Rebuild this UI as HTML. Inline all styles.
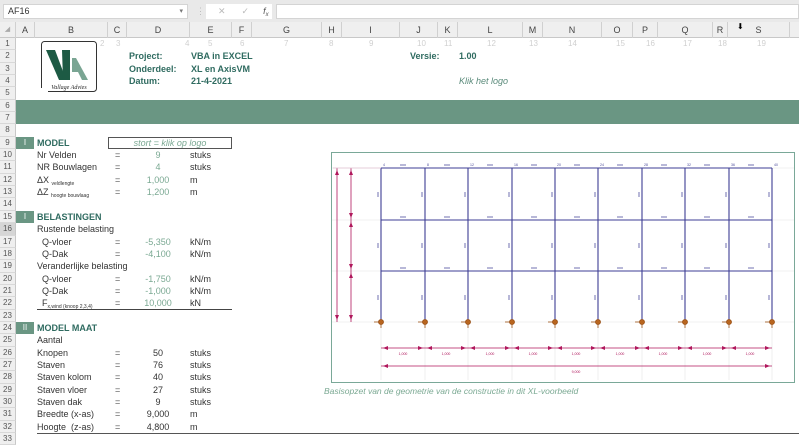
<!DOCTYPE html>
<html><head><meta charset="utf-8">
<style>
*{margin:0;padding:0;box-sizing:border-box}
body{width:799px;height:437px;overflow:hidden;background:#fff;font-family:"Liberation Sans",sans-serif;font-size:9px;color:#333;position:relative}
.a{position:absolute;white-space:nowrap}
#fb{position:absolute;left:0;top:0;width:799px;height:22px;background:#e9e9e9}
#hdr{position:absolute;left:0;top:22px;width:799px;height:16px;background:#efefef;border-bottom:1px solid #c8c8c8}
.ch{position:absolute;top:0;height:16px;line-height:16px;text-align:center;color:#444;font-size:9px;border-right:1px solid #d0d0d0}
#rows{position:absolute;left:0;top:38px;width:799px}
.r{position:relative;height:12.35px;line-height:12.35px}
.rn{position:absolute;left:0;top:0;width:16px;height:100%;background:#efefef;color:#555;font-size:8px;text-align:center;border-bottom:1px solid #d8d8d8;border-right:1px solid #c8c8c8}
.r .c{position:absolute;top:0;white-space:nowrap}
sub{font-size:5px;line-height:0;vertical-align:-2px}
.t{color:#2f6b60;font-weight:bold}
.g{color:#7ba993;text-align:center;width:30px;left:143px}
.k{color:#333;text-align:center;width:30px;left:143px}
.eq{left:115px;color:#555}
.u{left:190px}
.sec{left:16px;width:18px;height:100%;background:#6a9683;color:#fff;text-align:center;font-size:8px}
.faint{color:#d0d0d0;font-size:8px}
</style></head><body>
<div id="fb">
 <div class="a" style="left:3px;top:4px;width:185px;height:15px;background:#fff;border:1px solid #d4d4d4;line-height:13px;padding-left:4px;color:#333">AF16<span style="position:absolute;right:4px;color:#777;font-size:7px">▾</span></div>
 <div class="a" style="left:196px;top:6px;color:#bbb">⋮</div>
 <div class="a" style="left:206px;top:4px;width:66px;height:15px;background:#fff;line-height:14px;color:#bbb"><span style="margin-left:12px">✕</span><span style="margin-left:16px">✓</span><span style="margin-left:14px;font-style:italic;color:#555">f<sub style="font-size:6px">x</sub></span></div>
 <div class="a" style="left:276px;top:4px;width:523px;height:15px;background:#fff;border:1px solid #d4d4d4"></div>
</div>
<div id="hdr">
 <div class="ch" style="left:0;width:16px;color:#aaa;font-size:7px">◢</div>
 <div class="ch" style="left:16px;width:19px">A</div>
 <div class="ch" style="left:35px;width:73px">B</div>
 <div class="ch" style="left:108px;width:19px">C</div>
 <div class="ch" style="left:127px;width:63px">D</div>
 <div class="ch" style="left:190px;width:42px">E</div>
 <div class="ch" style="left:232px;width:20px">F</div>
 <div class="ch" style="left:252px;width:70px">G</div>
 <div class="ch" style="left:322px;width:20px">H</div>
 <div class="ch" style="left:342px;width:58px">I</div>
 <div class="ch" style="left:400px;width:38px">J</div>
 <div class="ch" style="left:438px;width:20px">K</div>
 <div class="ch" style="left:458px;width:65px">L</div>
 <div class="ch" style="left:523px;width:20px">M</div>
 <div class="ch" style="left:543px;width:59px">N</div>
 <div class="ch" style="left:602px;width:31px">O</div>
 <div class="ch" style="left:633px;width:25px">P</div>
 <div class="ch" style="left:658px;width:55px">Q</div>
 <div class="ch" style="left:713px;width:15px">R</div>
 <div class="ch" style="left:728px;width:62px">S</div>
 <div class="a" style="left:737px;top:0;font-size:8px;color:#000">⬇</div>
</div>
<div id="rows">
<div class="r"><div class="rn">1</div>
 <span class="c faint" style="left:100px">2</span><span class="c faint" style="left:116px">3</span><span class="c faint" style="left:185px">4</span><span class="c faint" style="left:208px">5</span><span class="c faint" style="left:240px">6</span><span class="c faint" style="left:284px">7</span><span class="c faint" style="left:329px">8</span><span class="c faint" style="left:369px">9</span><span class="c faint" style="left:417px">10</span><span class="c faint" style="left:444px">11</span><span class="c faint" style="left:487px">12</span><span class="c faint" style="left:529px">13</span><span class="c faint" style="left:568px">14</span><span class="c faint" style="left:616px">15</span><span class="c faint" style="left:646px">16</span><span class="c faint" style="left:683px">17</span><span class="c faint" style="left:718px">18</span><span class="c faint" style="left:757px">19</span></div>
<div class="r"><div class="rn">2</div><span class="c t" style="left:129px">Project:</span><span class="c t" style="left:191px">VBA in EXCEL</span><span class="c t" style="left:410px">Versie:</span><span class="c t" style="left:459px">1.00</span></div>
<div class="r"><div class="rn">3</div><span class="c t" style="left:129px">Onderdeel:</span><span class="c t" style="left:191px">XL en AxisVM</span></div>
<div class="r"><div class="rn">4</div><span class="c t" style="left:129px">Datum:</span><span class="c t" style="left:191px">21-4-2021</span><span class="c" style="left:459px;color:#5a8a7a;font-style:italic">Klik het logo</span></div>
<div class="r"><div class="rn">5</div></div>
<div class="r" style="background:#6a9683"><div class="rn">6</div></div>
<div class="r" style="background:#6a9683"><div class="rn">7</div></div>
<div class="r"><div class="rn">8</div></div>
<div class="r"><div class="rn">9</div><span class="c sec">I</span><span class="c t" style="left:37px">MODEL</span><span class="c" style="left:108px;width:124px;height:12px;line-height:10px;border:1px solid #555;color:#7ba993;font-style:italic;text-align:center">stort = klik op logo</span></div>
<div class="r"><div class="rn">10</div><span class="c" style="left:37px">Nr Velden</span><span class="c eq">=</span><span class="c g">9</span><span class="c u">stuks</span></div>
<div class="r"><div class="rn">11</div><span class="c" style="left:37px">NR Bouwlagen</span><span class="c eq">=</span><span class="c g">4</span><span class="c u">stuks</span></div>
<div class="r"><div class="rn">12</div><span class="c" style="left:37px">ΔX <sub>veldlengte</sub></span><span class="c eq">=</span><span class="c g">1,000</span><span class="c u">m</span></div>
<div class="r"><div class="rn">13</div><span class="c" style="left:37px">ΔZ <sub>hoogte bouwlaag</sub></span><span class="c eq">=</span><span class="c g">1,200</span><span class="c u">m</span></div>
<div class="r"><div class="rn">14</div></div>
<div class="r"><div class="rn">15</div><span class="c sec">I</span><span class="c t" style="left:37px">BELASTINGEN</span></div>
<div class="r"><div class="rn" style="background:#d6d6d6">16</div><span class="c" style="left:37px">Rustende belasting</span></div>
<div class="r"><div class="rn">17</div><span class="c" style="left:42px">Q-vloer</span><span class="c eq">=</span><span class="c g">-5,350</span><span class="c u">kN/m</span></div>
<div class="r"><div class="rn">18</div><span class="c" style="left:42px">Q-Dak</span><span class="c eq">=</span><span class="c g">-4,100</span><span class="c u">kN/m</span></div>
<div class="r"><div class="rn">19</div><span class="c" style="left:37px">Veranderlijke belasting</span></div>
<div class="r"><div class="rn">20</div><span class="c" style="left:42px">Q-vloer</span><span class="c eq">=</span><span class="c g">-1,750</span><span class="c u">kN/m</span></div>
<div class="r"><div class="rn">21</div><span class="c" style="left:42px">Q-Dak</span><span class="c eq">=</span><span class="c g">-1,000</span><span class="c u">kN/m</span></div>
<div class="r"><div class="rn">22</div><span class="c" style="left:42px">F<sub>x,wind (knoop 2,3,4)</sub></span><span class="c eq">=</span><span class="c g">10,000</span><span class="c u">kN</span><div class="c" style="left:37px;width:195px;bottom:0;top:auto;height:1px;background:#444"></div></div>
<div class="r"><div class="rn">23</div></div>
<div class="r"><div class="rn">24</div><span class="c sec">II</span><span class="c t" style="left:37px">MODEL MAAT</span></div>
<div class="r"><div class="rn">25</div><span class="c" style="left:37px">Aantal</span></div>
<div class="r"><div class="rn">26</div><span class="c" style="left:37px">Knopen</span><span class="c eq">=</span><span class="c k">50</span><span class="c u">stuks</span></div>
<div class="r"><div class="rn">27</div><span class="c" style="left:37px">Staven</span><span class="c eq">=</span><span class="c k">76</span><span class="c u">stuks</span></div>
<div class="r"><div class="rn">28</div><span class="c" style="left:37px">Staven kolom</span><span class="c eq">=</span><span class="c k">40</span><span class="c u">stuks</span></div>
<div class="r"><div class="rn">29</div><span class="c" style="left:37px">Staven vloer</span><span class="c eq">=</span><span class="c k">27</span><span class="c u">stuks</span></div>
<div class="r"><div class="rn">30</div><span class="c" style="left:37px">Staven dak</span><span class="c eq">=</span><span class="c k">9</span><span class="c u">stuks</span></div>
<div class="r"><div class="rn">31</div><span class="c" style="left:37px">Breedte (x-as)</span><span class="c eq">=</span><span class="c k">9,000</span><span class="c u">m</span></div>
<div class="r"><div class="rn">32</div><span class="c" style="left:37px">Hoogte &nbsp;(z-as)</span><span class="c eq">=</span><span class="c k">4,800</span><span class="c u">m</span><div class="c" style="left:37px;width:762px;bottom:-1px;top:auto;height:1px;background:#555"></div></div>
<div class="r"><div class="rn">33</div></div>
</div>

<!-- logo -->
<svg class="a" style="left:40px;top:40px" width="58" height="54" viewBox="0 0 58 54">
 <rect x="1.5" y="1.5" width="55" height="50" rx="3" fill="#fff" stroke="#333" stroke-width="1"/>
 <polygon points="6,10 15,10 24,34 24,40 19,40" fill="#1d5a44"/>
 <polygon points="22,10 30,10 30,40 23,40" fill="#1d5a44"/>
 <polygon points="32,18 36,18 48,40 42,40 38,32 32,32" fill="#7aa593"/>
 <text x="29" y="49" font-size="6" font-style="italic" font-family="Liberation Serif" fill="#222" text-anchor="middle">Vallage Advies</text>
 <rect x="0" y="44" width="8" height="8" fill="#fff"/><line x1="1.5" y1="44" x2="1.5" y2="48" stroke="#333"/>
</svg>

<!-- frame picture -->
<svg class="a" style="left:0;top:0" width="799" height="437">
 <rect x="331.5" y="152.5" width="463" height="230" fill="#fff" stroke="#7aa898" stroke-width="1"/>
 <g stroke="#e4e4e4" stroke-width="0.6">
  <line x1="332" y1="168" x2="794" y2="168"/><line x1="332" y1="220" x2="794" y2="220"/><line x1="332" y1="271" x2="794" y2="271"/><line x1="332" y1="322" x2="794" y2="322"/>
  <line x1="381" y1="322" x2="381" y2="380"/><line x1="425" y1="322" x2="425" y2="380"/><line x1="468" y1="322" x2="468" y2="380"/><line x1="512" y1="322" x2="512" y2="380"/><line x1="555" y1="322" x2="555" y2="380"/><line x1="598" y1="322" x2="598" y2="380"/><line x1="642" y1="322" x2="642" y2="380"/><line x1="685" y1="322" x2="685" y2="380"/><line x1="729" y1="322" x2="729" y2="380"/><line x1="772" y1="322" x2="772" y2="380"/>
 </g>
 <g stroke="#3e3e94" stroke-width="1.1">
  <line x1="381" y1="168" x2="772" y2="168"/><line x1="381" y1="220" x2="772" y2="220"/><line x1="381" y1="271" x2="772" y2="271"/>
  <line x1="381" y1="168" x2="381" y2="322"/><line x1="425" y1="168" x2="425" y2="322"/><line x1="468" y1="168" x2="468" y2="322"/><line x1="512" y1="168" x2="512" y2="322"/><line x1="555" y1="168" x2="555" y2="322"/><line x1="598" y1="168" x2="598" y2="322"/><line x1="642" y1="168" x2="642" y2="322"/><line x1="685" y1="168" x2="685" y2="322"/><line x1="729" y1="168" x2="729" y2="322"/><line x1="772" y1="168" x2="772" y2="322"/>
 </g>
 <g fill="#b8b8d8">
  <rect x="400" y="164" width="6" height="2"/><rect x="444" y="164" width="6" height="2"/><rect x="487" y="164" width="6" height="2"/><rect x="531" y="164" width="6" height="2"/><rect x="574" y="164" width="6" height="2"/><rect x="617" y="164" width="6" height="2"/><rect x="661" y="164" width="6" height="2"/><rect x="704" y="164" width="6" height="2"/><rect x="748" y="164" width="6" height="2"/>
  <rect x="400" y="216" width="6" height="2"/><rect x="444" y="216" width="6" height="2"/><rect x="487" y="216" width="6" height="2"/><rect x="531" y="216" width="6" height="2"/><rect x="574" y="216" width="6" height="2"/><rect x="617" y="216" width="6" height="2"/><rect x="661" y="216" width="6" height="2"/><rect x="704" y="216" width="6" height="2"/><rect x="748" y="216" width="6" height="2"/>
  <rect x="400" y="267" width="6" height="2"/><rect x="444" y="267" width="6" height="2"/><rect x="487" y="267" width="6" height="2"/><rect x="531" y="267" width="6" height="2"/><rect x="574" y="267" width="6" height="2"/><rect x="617" y="267" width="6" height="2"/><rect x="661" y="267" width="6" height="2"/><rect x="704" y="267" width="6" height="2"/><rect x="748" y="267" width="6" height="2"/>
  <rect x="377" y="192" width="2" height="5"/><rect x="421" y="192" width="2" height="5"/><rect x="464" y="192" width="2" height="5"/><rect x="508" y="192" width="2" height="5"/><rect x="551" y="192" width="2" height="5"/><rect x="594" y="192" width="2" height="5"/><rect x="638" y="192" width="2" height="5"/><rect x="681" y="192" width="2" height="5"/><rect x="725" y="192" width="2" height="5"/><rect x="768" y="192" width="2" height="5"/>
  <rect x="377" y="243" width="2" height="5"/><rect x="421" y="243" width="2" height="5"/><rect x="464" y="243" width="2" height="5"/><rect x="508" y="243" width="2" height="5"/><rect x="551" y="243" width="2" height="5"/><rect x="594" y="243" width="2" height="5"/><rect x="638" y="243" width="2" height="5"/><rect x="681" y="243" width="2" height="5"/><rect x="725" y="243" width="2" height="5"/><rect x="768" y="243" width="2" height="5"/>
  <rect x="377" y="295" width="2" height="5"/><rect x="421" y="295" width="2" height="5"/><rect x="464" y="295" width="2" height="5"/><rect x="508" y="295" width="2" height="5"/><rect x="551" y="295" width="2" height="5"/><rect x="594" y="295" width="2" height="5"/><rect x="638" y="295" width="2" height="5"/><rect x="681" y="295" width="2" height="5"/><rect x="725" y="295" width="2" height="5"/><rect x="768" y="295" width="2" height="5"/>
 </g>
 <g fill="#b8651e" stroke="#9a5015" stroke-width="0.8">
  <circle cx="381" cy="322" r="2.5"/><circle cx="425" cy="322" r="2.5"/><circle cx="468" cy="322" r="2.5"/><circle cx="512" cy="322" r="2.5"/><circle cx="555" cy="322" r="2.5"/><circle cx="598" cy="322" r="2.5"/><circle cx="642" cy="322" r="2.5"/><circle cx="685" cy="322" r="2.5"/><circle cx="729" cy="322" r="2.5"/><circle cx="772" cy="322" r="2.5"/>
  <line x1="374" y1="322" x2="379" y2="322"/><line x1="418" y1="322" x2="423" y2="322"/><line x1="461" y1="322" x2="466" y2="322"/><line x1="505" y1="322" x2="510" y2="322"/><line x1="548" y1="322" x2="553" y2="322"/><line x1="591" y1="322" x2="596" y2="322"/><line x1="635" y1="322" x2="640" y2="322"/><line x1="678" y1="322" x2="683" y2="322"/><line x1="722" y1="322" x2="727" y2="322"/><line x1="765" y1="322" x2="770" y2="322"/>
  <line x1="381" y1="324" x2="381" y2="328"/><line x1="425" y1="324" x2="425" y2="328"/><line x1="468" y1="324" x2="468" y2="328"/><line x1="512" y1="324" x2="512" y2="328"/><line x1="555" y1="324" x2="555" y2="328"/><line x1="598" y1="324" x2="598" y2="328"/><line x1="642" y1="324" x2="642" y2="328"/><line x1="685" y1="324" x2="685" y2="328"/><line x1="729" y1="324" x2="729" y2="328"/><line x1="772" y1="324" x2="772" y2="328"/>
 </g>
 <g stroke="#b0175c" stroke-width="0.8" fill="#b0175c">
  <line x1="381" y1="348" x2="772" y2="348"/><line x1="381" y1="366" x2="772" y2="366"/>
  <line x1="337" y1="168" x2="337" y2="322"/><line x1="351" y1="168" x2="351" y2="322"/>
  <line x1="333" y1="168" x2="381" y2="168" stroke="#e0c0d0"/>
 </g>
 <g fill="#b0175c">
  <path d="M383,348 l5,-2 v4z M423,348 l-5,-2 v4z M427,348 l5,-2 v4z M466,348 l-5,-2 v4z M470,348 l5,-2 v4z M510,348 l-5,-2 v4z M514,348 l5,-2 v4z M553,348 l-5,-2 v4z M557,348 l5,-2 v4z M596,348 l-5,-2 v4z M600,348 l5,-2 v4z M640,348 l-5,-2 v4z M644,348 l5,-2 v4z M683,348 l-5,-2 v4z M687,348 l5,-2 v4z M727,348 l-5,-2 v4z M731,348 l5,-2 v4z M770,348 l-5,-2 v4z"/>
  <path d="M383,366 l5,-2 v4z M770,366 l-5,-2 v4z"/>
  <path d="M337,170 l-2,5 h4z M337,320 l-2,-5 h4z M351,170 l-2,5 h4z M351,218 l-2,-5 h4z M351,222 l-2,5 h4z M351,269 l-2,-5 h4z M351,273 l-2,5 h4z M351,320 l-2,-5 h4z"/>
 </g>
 <g font-size="3.5" fill="#b0175c" font-family="Liberation Sans" text-anchor="middle">
  <text x="403" y="355">1,000</text><text x="446" y="355">1,000</text><text x="490" y="355">1,000</text><text x="533" y="355">1,000</text><text x="576" y="355">1,000</text><text x="620" y="355">1,000</text><text x="663" y="355">1,000</text><text x="707" y="355">1,000</text><text x="750" y="355">1,000</text><text x="576" y="373">9,000</text>
 </g>
 <g font-size="3.5" fill="#4a4a9a" font-family="Liberation Sans">
  <text x="383" y="166">4</text><text x="427" y="166">8</text><text x="470" y="166">12</text><text x="514" y="166">16</text><text x="557" y="166">20</text><text x="600" y="166">24</text><text x="644" y="166">28</text><text x="687" y="166">32</text><text x="731" y="166">36</text><text x="774" y="166">40</text>
 </g>
</svg>
<div class="a" style="left:324px;top:386px;color:#7ba993;font-style:italic;font-size:8.5px">Basisopzet van de geometrie van de constructie in dit XL-voorbeeld</div>
</body></html>
